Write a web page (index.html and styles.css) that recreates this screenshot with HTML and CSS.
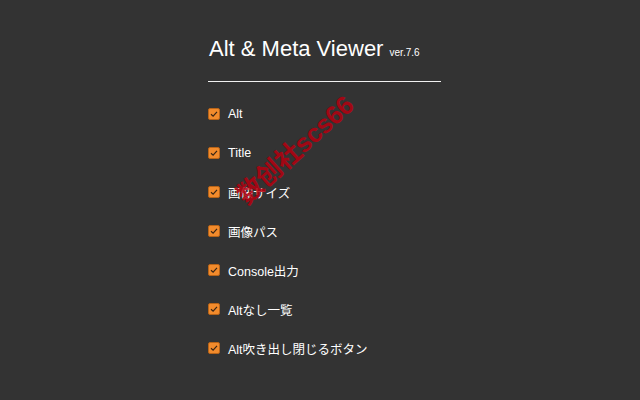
FILE: index.html
```html
<!DOCTYPE html>
<html lang="ja">
<head>
<meta charset="utf-8">
<link rel="stylesheet" href="styles.css">
</head>
<body>
<div class="wrap">
  <h1 class="title">Alt &amp; Meta Viewer <span class="ver">ver.7.6</span></h1>
  <div class="rule"></div>
  <ul class="list">
    <li class="item"><span class="box"><svg viewBox="0 0 12 12" width="12" height="12"><path d="M3 6.2 L5.1 8.2 L9 3.8" fill="none" stroke="#3b2615" stroke-width="1.2"/></svg></span><span>Alt</span></li>
    <li class="item"><span class="box"><svg viewBox="0 0 12 12" width="12" height="12"><path d="M3 6.2 L5.1 8.2 L9 3.8" fill="none" stroke="#3b2615" stroke-width="1.2"/></svg></span><span>Title</span></li>
    <li class="item"><span class="box"><svg viewBox="0 0 12 12" width="12" height="12"><path d="M3 6.2 L5.1 8.2 L9 3.8" fill="none" stroke="#3b2615" stroke-width="1.2"/></svg></span><span>画像サイズ</span></li>
    <li class="item"><span class="box"><svg viewBox="0 0 12 12" width="12" height="12"><path d="M3 6.2 L5.1 8.2 L9 3.8" fill="none" stroke="#3b2615" stroke-width="1.2"/></svg></span><span>画像パス</span></li>
    <li class="item"><span class="box"><svg viewBox="0 0 12 12" width="12" height="12"><path d="M3 6.2 L5.1 8.2 L9 3.8" fill="none" stroke="#3b2615" stroke-width="1.2"/></svg></span><span>Console出力</span></li>
    <li class="item"><span class="box"><svg viewBox="0 0 12 12" width="12" height="12"><path d="M3 6.2 L5.1 8.2 L9 3.8" fill="none" stroke="#3b2615" stroke-width="1.2"/></svg></span><span>Altなし一覧</span></li>
    <li class="item"><span class="box"><svg viewBox="0 0 12 12" width="12" height="12"><path d="M3 6.2 L5.1 8.2 L9 3.8" fill="none" stroke="#3b2615" stroke-width="1.2"/></svg></span><span>Alt吹き出し閉じるボタン</span></li>
  </ul>
</div>
<div class="watermark">数创社scs66</div>
</body>
</html>
```
FILE: styles.css
```css
html, body {
  margin: 0;
  padding: 0;
  width: 640px;
  height: 400px;
  background: #333333;
  overflow: hidden;
  font-family: "Liberation Sans", "Noto Sans CJK JP", sans-serif;
  color: #ffffff;
}
.wrap {
  margin-left: 208px;
  width: 233px;
  padding-top: 35px;
}
.title {
  margin: 0 0 0 1px;
  font-weight: normal;
  font-size: 22px;
  line-height: 28px;
}
.ver {
  font-size: 10px;
}
.rule {
  margin-top: 14px;
  height: 1px;
  background: #f2f2f2;
}
.list {
  list-style: none;
  margin: 0;
  padding: 0;
  padding-top: 24px;
  display: flex;
  flex-direction: column;
  gap: 23px;
}
.item {
  display: flex;
  align-items: center;
  gap: 8px;
  height: 16px;
  font-size: 12.5px;
}
.box {
  width: 12px;
  height: 12px;
  box-sizing: border-box;
  background: #f28b2c;
  border: 1px solid #b86418;
  border-radius: 2px;
  display: flex;
  align-items: center;
  justify-content: center;
  overflow: hidden;
}
.box svg {
  flex: none;
}
.watermark {
  position: absolute;
  left: 205px;
  top: 135px;
  width: 180px;
  text-align: center;
  font-size: 26px;
  line-height: 30px;
  font-weight: bold;
  color: #b5000f;
  opacity: 0.85;
  transform: rotate(-42deg);
  font-family: "Liberation Sans", "Noto Sans CJK SC", sans-serif;
  letter-spacing: -0.5px;
}
```
